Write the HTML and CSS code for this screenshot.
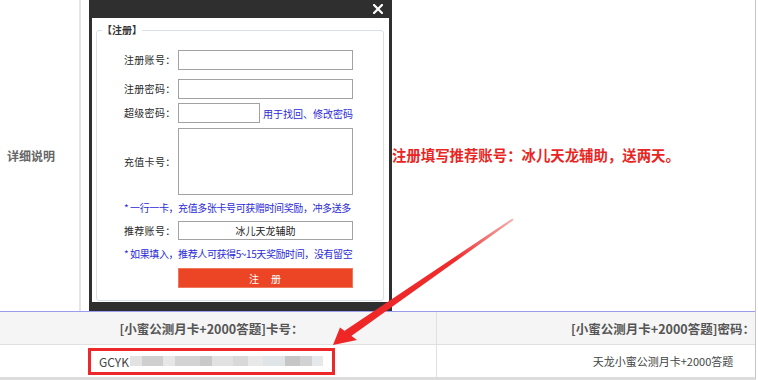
FILE: index.html
```html
<!DOCTYPE html>
<html lang="zh-CN">
<head>
<meta charset="utf-8">
<title>详细说明</title>
<link rel="stylesheet" href="styles.css">
</head>
<body>
<div class="page">
  <div class="top-row">
    <div class="label-cell">详细说明</div>
    <div class="content-cell">
      <div class="dialog">
        <div class="dialog-title">
          <svg class="close" width="10" height="10" viewBox="0 0 10 10"><path d="M1 1L9 9M9 1L1 9" stroke="#fff" stroke-width="2.2" stroke-linecap="square"/></svg>
        </div>
        <div class="dialog-body">
          <fieldset class="reg">
            <legend>【注册】</legend>
            <div class="form">
              <div class="row">
                <span class="lbl">注册账号：</span><input class="field" type="text">
              </div>
              <div class="row row-2">
                <span class="lbl">注册密码：</span><input class="field" type="password">
              </div>
              <div class="row row-3">
                <span class="lbl">超级密码：</span><input class="field field-sm" type="password"><span class="link">用于找回、修改密码</span>
              </div>
              <div class="row row-card">
                <span class="lbl">充值卡号：</span><textarea class="field field-area"></textarea>
              </div>
              <div class="note">* 一行一卡，充值多张卡号可获赠时间奖励，冲多送多</div>
              <div class="row row-ref">
                <span class="lbl">推荐账号：</span><input class="field field-center" type="text" value="冰儿天龙辅助">
              </div>
              <div class="note note-2">* 如果填入，推荐人可获得5~15天奖励时间，没有留空</div>
              <button class="btn" type="button">注　册</button>
            </div>
          </fieldset>
        </div>
      </div>
      <p class="promo">注册填写推荐账号：冰儿天龙辅助，送两天。</p>
    </div>
  </div>
  <div class="card-table">
    <div class="th th-left">[小蜜公测月卡+2000答题]卡号：</div>
    <div class="th th-right">[小蜜公测月卡+2000答题]密码：</div>
    <div class="td td-left">
      <span class="redbox">GCYK<span class="blur"><i class="b1"></i><i class="b2"></i><i class="b3"></i><i class="b4"></i><i class="b5"></i><i class="b6"></i><i class="b7"></i><i class="b8"></i><i class="b9"></i><i class="b10"></i><i class="b11"></i><i class="b12"></i></span></span>
    </div>
    <div class="td td-right">天龙小蜜公测月卡+2000答题</div>
  </div>
  <svg class="arrow" width="758" height="380" viewBox="0 0 758 380">
    <defs>
      <linearGradient id="fade" gradientUnits="userSpaceOnUse" x1="347" y1="334" x2="513" y2="219">
        <stop offset="0" stop-color="#ee2626"/>
        <stop offset="0.65" stop-color="#ef2c2c"/>
        <stop offset="1" stop-color="#f6b0b0"/>
      </linearGradient>
    </defs>
    <polygon points="349.2,337.5 344.6,330.8 512.4,218.4 513.6,219.9" fill="url(#fade)"/>
    <polygon points="333,345 340,327.5 357,340" fill="#ee2626"/>
  </svg>
</div>
</body>
</html>
```

FILE: styles.css
```css
body {
  margin: 0;
  background: #fff;
  font-family: "Noto Sans CJK SC", sans-serif;
}

.page {
  position: relative;
  width: 755px;
  height: 377px;
  border-right: 1px solid #c4c4c4;
  border-bottom: 3px solid #dcdcdc;
  overflow: hidden;
  background: #fff;
}

.top-row {
  display: flex;
  height: 311px;
  border-bottom: 1px solid #9c9cee;
}

.label-cell {
  width: 81px;
  flex: none;
  box-sizing: border-box;
  border-right: 2px solid #e4e4e4;
  display: flex;
  align-items: center;
  padding-left: 7px;
  font-size: 12px;
  font-weight: bold;
  color: #666;
}

.content-cell {
  flex: 1;
  display: flex;
  align-items: center;
  padding-left: 8px;
}

.dialog {
  width: 303px;
  flex: none;
  box-sizing: border-box;
  border: 3px solid #2f2f2f;
  border-top: 0;
  border-bottom-width: 9px;
  background: #fff;
}

.dialog-title {
  height: 18px;
  background: #2f2f2f;
  display: flex;
  justify-content: flex-end;
  align-items: center;
  padding-right: 6px;
}

.close {
  display: block;
}

.dialog-body {
  padding: 6px 5px 1px 4px;
}

.reg {
  margin: 0;
  padding: 0;
  border: 1px solid #d9e0e8;
  border-radius: 3px;
  min-width: 0;
}

.reg legend {
  margin-left: 5px;
  padding: 0;
  font-size: 10px;
  line-height: 12px;
  font-weight: bold;
  color: #333;
}

.form {
  display: flex;
  flex-direction: column;
  align-items: flex-start;
  padding: 14px 0 12px 27px;
  font-size: 10px;
  color: #2a2a2a;
}

.row {
  display: flex;
  align-items: center;
  height: 20px;
}

.row-2 { margin-top: 9px; }
.row-3 { margin-top: 4px; }
.row-card { margin-top: 5px; height: 67px; }
.row-ref { height: 19px; }

.lbl {
  width: 54px;
  flex: none;
  line-height: 12px;
  white-space: nowrap;
  letter-spacing: 0.3px;
}

.field {
  width: 175px;
  height: 20px;
  box-sizing: border-box;
  margin: 0;
  padding: 0 4px;
  border: 1px solid #a2a2a2;
  background: #fff;
  font-family: inherit;
  font-size: 10px;
  color: #222;
  outline: none;
}

.field-sm { width: 82px; }

.field-area {
  height: 67px;
  resize: none;
}

.field-center {
  height: 19px;
  text-align: center;
}

.link {
  margin-left: 3px;
  color: #2b2bd8;
  white-space: nowrap;
}

.note {
  height: 26px;
  line-height: 26px;
  color: #2b2bd8;
  white-space: nowrap;
  letter-spacing: -0.4px;
}

.note-2 { height: 28px; line-height: 28px; }

.btn {
  margin: 0 0 0 54px;
  width: 175px;
  height: 20px;
  padding: 0;
  border: 1px solid #f0785a;
  background: #eb4525;
  color: #fff;
  font-family: inherit;
  font-size: 10px;
  letter-spacing: 1px;
}

.promo {
  margin: 0 0 3px;
  color: #e8261f;
  font-weight: bold;
  font-size: 14.4px;
  white-space: nowrap;
}

.card-table {
  display: grid;
  grid-template-columns: 437px 452px;
}

.th,
.td {
  display: flex;
  align-items: center;
  justify-content: center;
  white-space: nowrap;
}

.th {
  height: 33px;
  box-sizing: border-box;
  background: #f5f5f5;
  border-bottom: 1px solid #e0e0e0;
  font-size: 12.5px;
  font-weight: bold;
  color: #555;
}

.td {
  height: 32px;
  font-size: 11px;
  color: #444;
}

.th-left,
.td-left {
  border-right: 1px solid #e0e0e0;
  padding-right: 13px;
}

.redbox {
  display: inline-flex;
  align-items: center;
  height: 27px;
  box-sizing: border-box;
  padding: 0 9px 0 8px;
  border: 3px solid #ee2828;
  font-size: 12px;
  color: #444;
}

.blur {
  display: flex;
  height: 10px;
  margin-left: 1px;
}

.blur i { display: block; height: 10px; }
.b1 { width: 12px; background: #e2e2e2; }
.b2 { width: 21px; background: #cfcfcf; }
.b3 { width: 12px; background: #e6e6e6; }
.b4 { width: 25px; background: #d3d3d3; }
.b5 { width: 12px; background: #c9c9c9; }
.b6 { width: 21px; background: #e1e1e1; }
.b7 { width: 15px; background: #d8d8d8; }
.b8 { width: 15px; background: #e8e8e8; }
.b9 { width: 22px; background: #dfe4e7; }
.b10 { width: 15px; background: #c6c6c6; }
.b11 { width: 12px; background: #d2d2d2; }
.b12 { width: 11px; background: #e5e9eb; }

.arrow {
  position: absolute;
  left: 0;
  top: 0;
  pointer-events: none;
}
```
